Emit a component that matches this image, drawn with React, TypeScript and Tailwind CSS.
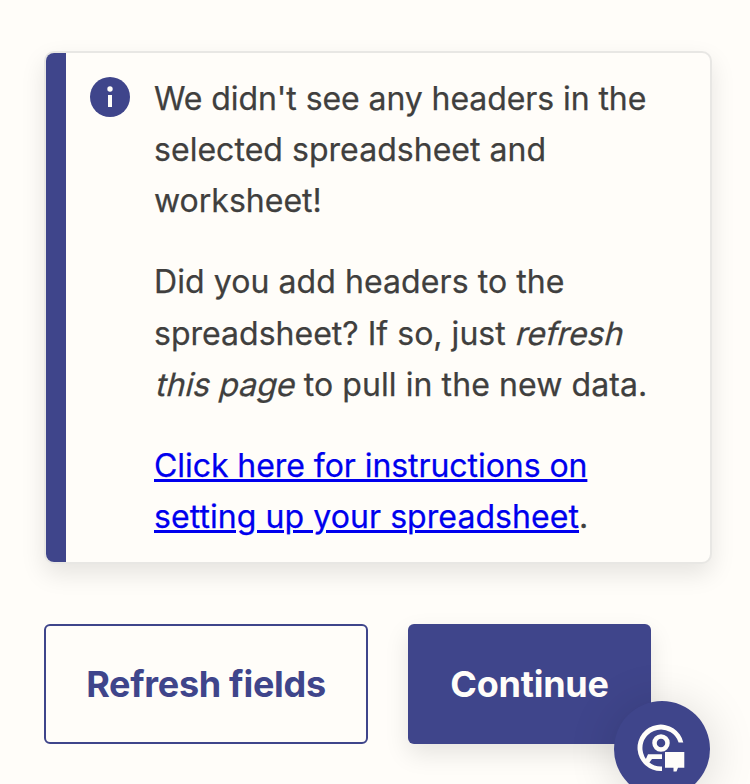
export default function App() {
  return (
    <main className="relative h-[784px] w-[750px] overflow-hidden bg-[#fffdf9] px-11 pt-[51px] font-['Inter',sans-serif] text-[#403f3e]">
      <section className="flex h-[513px] w-[668px] rounded-[10px] border-2 border-[#e8e7e4] bg-[#fffdf9] shadow-[0_10px_24px_rgba(0,0,0,0.1)]">
        <div className="w-5 shrink-0 rounded-l-[8px] bg-[#3f458b]" />
        <svg className="ml-6 mt-6 size-10 shrink-0" viewBox="0 0 40 40">
          <circle cx="20" cy="20" r="20" fill="#3f458b" />
          <circle cx="20" cy="12" r="2.7" fill="#fffdf9" />
          <path d="M18 18h4v12h-4z" fill="#fffdf9" />
        </svg>
        <div className="ml-6 mt-5 text-[32px] leading-[51.2px] whitespace-nowrap [-webkit-text-stroke:0.25px]">
          <p>
            <span className="tracking-[-0.08px]">We didn't see any headers in the</span><br />
            <span className="tracking-[0.04px]">selected spreadsheet and</span><br />
            worksheet!
          </p>
          <p className="mt-[29.8px] tracking-[0.08px]">
            Did you add headers to the<br />
            <span className="tracking-[0.02px]">spreadsheet? If so, just </span>
            <span className="ml-[2px] inline-block -skew-x-[14deg] tracking-[-0.1px]">refresh</span><br />
            <span className="-mr-[2px] inline-block -skew-x-[14deg] pl-[3px] tracking-[0.05px]">this page</span> to pull in the new data.
          </p>
          <p className="mt-[30.2px]">
            <a href="#" className="text-[#0000ee] underline decoration-[3px]">
              <span className="tracking-[-0.06px]">Click here for instructions on</span><br />
              <span className="tracking-[0.07px]">setting up your spreadsheet</span>
            </a>.
          </p>
        </div>
      </section>
      <div className="mt-[60px] flex gap-10">
        <button className="h-[120px] w-[324px] rounded-[6px] border-2 border-[#3f458b] text-[36px] font-bold tracking-[-0.3px] whitespace-nowrap text-[#3f458b]">Refresh fields</button>
        <button className="h-[120px] w-[243px] rounded-[6px] bg-[#3f458b] text-[36px] font-bold tracking-[-0.25px] text-[#fffdf9] shadow-[0_10px_24px_rgba(0,0,0,0.1)]">Continue</button>
      </div>
      <button aria-label="Support" className="absolute left-[614px] top-[701px] size-24 rounded-full bg-[#3f458b] shadow-[0_4px_48px_rgba(0,0,0,0.15)]">
        <svg className="size-24" viewBox="0 0 96 96" fill="#fffdf9">
          <path d="M48 70H47A23.2 23.2 0 1 1 69.3 41.5H64.6A18.5 18.5 0 1 0 47 65.5H48Z" />
          <circle cx="47" cy="42" r="6.5" fill="none" stroke="#fffdf9" strokeWidth="4.5" />
          <path d="M34 53.3H48V58H38L35 62L31 60Z" />
          <path d="M51 51h19.3v15.7H64l-1.5 3.8h-3V66.7H51z" />
        </svg>
      </button>
    </main>
  );
}
